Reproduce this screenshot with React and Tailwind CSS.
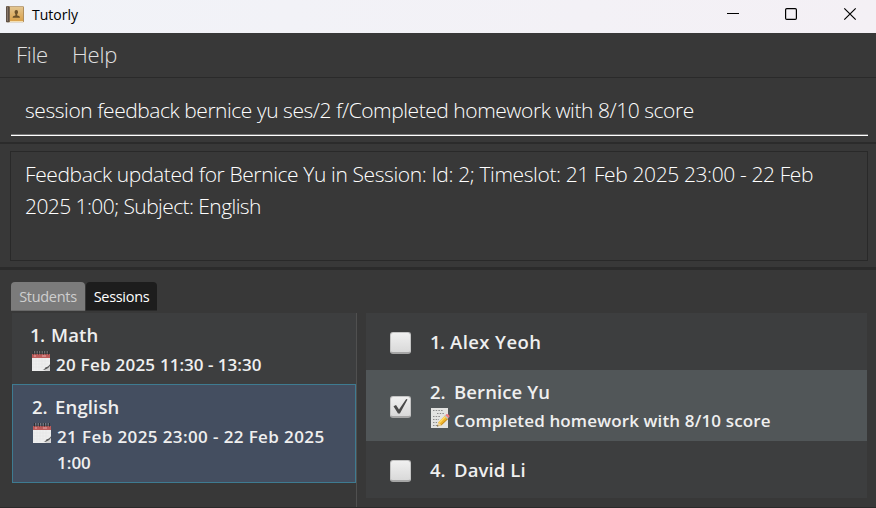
import React from "react";

function BookIcon() {
  return (
    <svg width="18" height="17" viewBox="0 0 18 17" className="block">
      <defs>
        <linearGradient id="cover" x1="0" y1="0" x2="0" y2="1">
          <stop offset="0" stopColor="#e3c590" />
          <stop offset="1" stopColor="#d9a14a" />
        </linearGradient>
      </defs>
      <rect x="0" y="0.3" width="18" height="16" rx="1" fill="#b08e5c" />
      <rect x="4" y="1" width="13" height="14" fill="url(#cover)" />
      <rect x="0" y="0.3" width="3.600" height="16" rx="0.8" fill="#5f5247" />
      <rect x="1" y="1" width="1" height="14" fill="#85766a" />
      <rect x="4" y="15" width="13" height="1" fill="#f3dfb5" />
      <path d="M10.300 4c1.100 0 1.700.8 1.700 1.900 0 1-.4 1.600-.8 2v1.700c1.200.2 2.800.5 2.800 2.100H6.600c0-1.600 1.600-1.900 2.800-2.100V7.900c-.4-.4-.8-1-.8-2 0-1.100.6-1.900 1.700-1.900z" fill="#6b5029" />
    </svg>
  );
}

function CalendarIcon() {
  return (
    <svg width="18" height="20" viewBox="0 0 18 20" className="block shrink-0">
      <rect x="0" y="3" width="18" height="17" fill="#eeeeee" />
      <rect x="0" y="3" width="18" height="4" fill="#bd5c5b" />
      <path d="M1 7v12M4 7v12M7 7v12M10 7v10M13 7v8M0 10h18M0 13h16M0 16h13" stroke="#e2e2e2" strokeWidth="0.500" />
      <path d="M2 5h2M10 5h4" stroke="#e3aaaa" strokeWidth="1" />
      <path d="M1.500 0v3.500M4 0v3.500M6.500 0v3.500M9 0v3.500M11.500 0v3.500M14 0v3.500M16.500 0v3.500" stroke="#2f3033" strokeWidth="1" />
      <path d="M2.700 0v2.500M5.200 0v2.500M7.700 0v2.500M10.200 0v2.500M12.700 0v2.500M15.200 0v2.500" stroke="#a8a8a8" strokeWidth="0.600" />
      <path d="M11 20c3-.4 5.500-3.500 7-6v6z" fill="#d4d4d4" />
      <path d="M10.500 19c1.800-.4 2.700-1.600 3-2.700 1.700-.2 3.100-1.200 4.500-3.100v1.600c-1.500 2.500-3.800 4.200-7.500 4.200z" fill="#5d5d5d" />
    </svg>
  );
}

function MemoIcon() {
  return (
    <svg width="19" height="20" viewBox="0 0 19 20" className="block shrink-0">
      <rect x="0" y="0" width="17" height="20" fill="#e3e3e1" />
      <path d="M2 2.500h10M6 5.500h8M2 8.500h8M2 11.500h6M2 14.500h4M2 17.500h4" stroke="#8b8b8b" strokeWidth="1" strokeDasharray="1.500 1.200" />
      <path d="M6 18.500l1.500-4.300L14 7.500l3.200 3.200-6.800 6.500z" fill="#efb52b" />
      <path d="M8.300 14.800L15 8" stroke="#ffda66" strokeWidth="1.400" />
      <path d="M10.200 17l6.800-6.500" stroke="#b97a17" strokeWidth="0.900" />
      <path d="M14 7.400l1.600-1.400c1.500-.2 2.800 1 2.900 2.500l-1.300 1.700z" fill="#ee7b80" />
      <path d="M13.400 8l3 3 .9-.9-3-3z" fill="#b9c3c6" />
      <path d="M6 18.500l1.500-4 2.600 2.500z" fill="#ecd0a0" />
      <path d="M6 18.500l.5-1.600 1.100 1z" fill="#333" />
    </svg>
  );
}

function CheckBox({ checked }) {
  return (
    <div className="flex h-[22px] w-[21px] shrink-0 items-center justify-center rounded-[3px] border border-b-2 border-[#c4c4c4] border-b-[#a6a6a6] bg-linear-to-b from-[#f0f0f0] to-[#d9d9d9]">
      {checked && (
        <svg width="15" height="15" viewBox="0 0 15 15" className="block">
          <path d="M.5 7.300L3 6l3 4.500L13.200 0l1.300.6L6.900 14.500H5z" fill="#4a4a4a" />
        </svg>
      )}
    </div>
  );
}

function TitleBar() {
  return (
    <header className="flex h-[33px] items-center bg-linear-to-r from-[#f1f3f8] to-[#f4f0f5] text-black">
      <div className="flex flex-1 items-center gap-2 pb-[4px] pl-[6px]">
        <BookIcon />
        <span className="text-[14px] leading-5">Tutorly</span>
      </div>
      <svg width="132" height="14" viewBox="0 0 132 14" className="mr-[18px] mb-[5px] block" fill="none" stroke="#000">
        <path d="M1 6.500h12" />
        <rect x="59.600" y="1.600" width="10.800" height="10.800" rx="1.200" strokeWidth="1.200" />
        <path d="M118.300 1.300l11.400 11.400M129.700 1.300l-11.400 11.400" strokeWidth="1.200" />
      </svg>
    </header>
  );
}

function Session({ number, title, children, selected }) {
  return (
    <li
      className={
        selected
          ? "h-[99px] border border-[#3e7b91] bg-[#444e60] pt-[9px] pl-[19px]"
          : "h-[71px] bg-[#3d3e3f] pt-[9px] pl-[19px]"
      }
    >
      <div className="flex text-[18.500px] leading-[26px]">
        <span className={selected ? "w-[23px]" : "-ml-px w-[21px] tracking-[-0.600px]"}>{number}.</span>
        <span className="tracking-[0.150px]">{title}</span>
      </div>
      <div className="flex gap-[6px] pl-px">
        <div className="pt-[3px]">
          <CalendarIcon />
        </div>
        <div className="pt-[4px] text-[17px] leading-[26px]">{children}</div>
      </div>
    </li>
  );
}

function Student({ number, name, checked, feedback }) {
  return (
    <li
      className={
        feedback
          ? "flex h-[71px] items-center gap-[19px] bg-[#515658] pl-[24px]"
          : "flex h-[57px] items-center gap-[19px] bg-[#3d3e3f] pl-[24px]"
      }
    >
      <div className="pt-[3px]">
        <CheckBox checked={checked} />
      </div>
      <div>
        <div className="flex text-[18.500px] leading-[26px]">
          <span className={number === 1 ? "w-[20px] tracking-[-0.600px]" : "w-[24px]"}>{number}.</span>
          <span className={number === 1 ? "tracking-[0.400px]" : "tracking-[0.100px]"}>{name}</span>
        </div>
        {feedback && (
          <div className="flex gap-[4px] pl-px">
            <div className="pt-[3px]">
              <MemoIcon />
            </div>
            <span className="-mb-px pt-[3px] text-[17px] leading-[26px] tracking-[0.140px]">{feedback}</span>
          </div>
        )}
      </div>
    </li>
  );
}

export default function App() {
  return (
    <div className="flex h-[508px] w-[876px] flex-col overflow-hidden whitespace-nowrap bg-[#383838] font-['Open_Sans','Noto_Sans',sans-serif] text-[#efefef]">
      <TitleBar />
      <nav className="flex h-[45px] items-center gap-[24px] border-b border-[#2a2a2a] pb-[2px] pl-[16px] text-[22px] font-light text-[#e0e0e0]">
        <span className="tracking-[-0.300px]">File</span>
        <span className="tracking-[-0.200px]">Help</span>
      </nav>
      <section className="h-[66px] border-b-2 border-[#2b2b2b] pr-[8px] pl-[11px]">
        <div className="border-b border-white">
          <div className="flex h-[57px] items-center border-b border-[#777777] pt-[9px] pl-[14px] text-[21px] font-light text-white">
            <span className="tracking-[-0.450px]">session feedback bernice yu ses/2 f/Completed homework with 8/10 score</span>
          </div>
        </div>
      </section>
      <section className="h-[126px] border-b-[3px] border-[#2b2b2b] pt-[7px] pr-[8px] pl-[10px]">
        <div className="h-[110px] border border-[#292929] pt-[6px] pl-[14px] text-[21px] leading-[32px] font-light text-white">
          <div className="tracking-[-0.390px]">Feedback updated for Bernice Yu in Session: Id: 2; Timeslot: 21 Feb 2025 23:00 - 22 Feb</div>
          <div className="tracking-[-0.580px]">2025 1:00; Subject: English</div>
        </div>
      </section>
      <div className="flex gap-px pt-[12px] pl-[11px] text-[14.500px] leading-[29px]">
        <div className="h-[29px] w-[74px] rounded-t-[4px] border-b border-[#686868] bg-[#7b7b7b] text-center tracking-[-0.300px] text-[#cecece]">Students</div>
        <div className="h-[29px] w-[71px] rounded-t-[4px] border-b border-[#2a2a2a] bg-[#1d1d1d] text-center tracking-[-0.300px] text-white">Sessions</div>
      </div>
      <main className="flex flex-1 gap-[9px] border-b border-[#2a2a2a] pt-[2px] pl-[12px] font-semibold">
        <ul className="w-[345px] border-r border-[#505050]">
          <Session number={1} title="Math">
            <span className="tracking-[0.250px]">20 Feb 2025 </span>
            <span>11:30 - 13:30</span>
          </Session>
          <Session number={2} title="English" selected>
            <div className="tracking-[0.390px]">21 Feb 2025 23:00 - 22 Feb 2025</div>
            <div>1:00</div>
          </Session>
        </ul>
        <ul className="w-[501px]">
          <Student number={1} name="Alex Yeoh" />
          <Student number={2} name="Bernice Yu" checked feedback="Completed homework with 8/10 score" />
          <Student number={4} name="David Li" />
        </ul>
      </main>
    </div>
  );
}
